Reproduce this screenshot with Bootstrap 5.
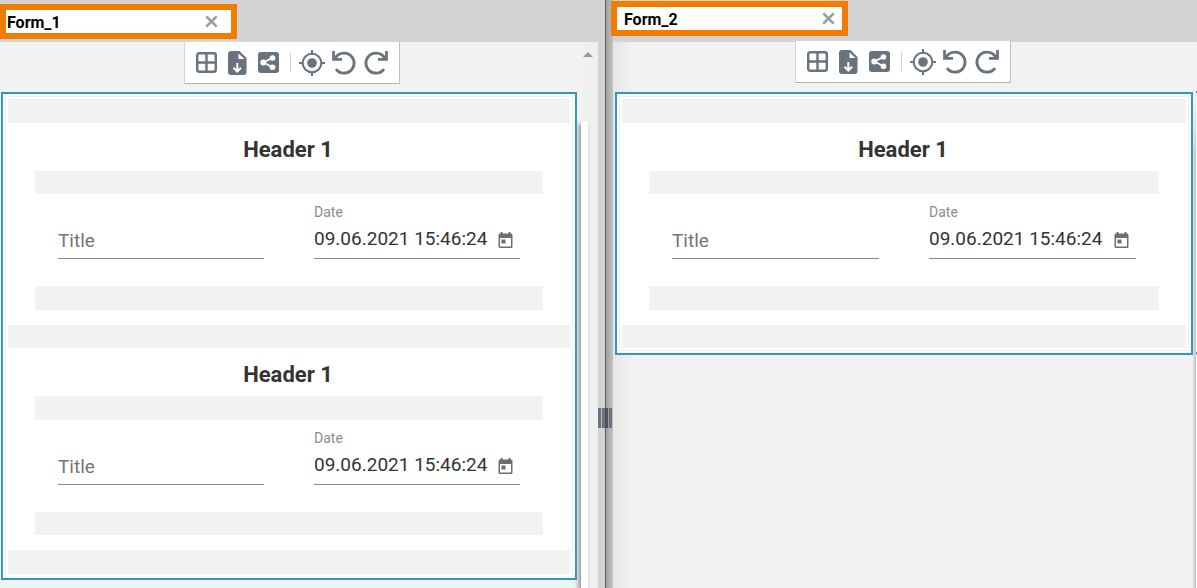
<!DOCTYPE html>
<html lang="en">
<head>
<meta charset="utf-8">
<meta name="viewport" content="width=device-width, initial-scale=1">
<title>Form designer</title>
<link href="https://cdn.jsdelivr.net/npm/bootstrap@5.3.0/dist/css/bootstrap.min.css" rel="stylesheet">
<style>
  :root { --strip: #f2f2f2; --bar: #d3d3d3; --blue: #2b98cf; --orange: #f07d00; --ink: #68737e; }
  body { font-family: Roboto, "Liberation Sans", sans-serif; background: var(--strip); color: #333; }
  .pane-left { flex: 598 1 0; min-width: 0; }
  .pane-right { flex: 584 1 0; min-width: 0; }
  .tabbar { height: 42px; background: var(--bar); }
  .pane-left .tabbar { padding-top: 4px; }
  .pane-right .tabbar { padding-top: 1px; }
  .doc-tab { width: 237px; height: 35px; border: 6px solid var(--orange); background: #fff; color: #000; font-weight: 700; font-size: 16px; line-height: 25px; padding: 0 12px 0 1px; }
  .pane-right .doc-tab { margin-left: -2px; padding: 0 6px 0 7px; position: relative; z-index: 2; }
  .tab-x, .tool { border: 0; background: none; padding: 0; color: var(--ink); display: flex; align-items: center; justify-content: center; }
  .tab-x { color: #959ca3; width: 15px; height: 22px; }
  .toolbar { height: 43px; width: 216px; padding: 0 6px; background: #fff; border: 1px solid #d5d5d5; border-bottom-color: #b3b3b3; border-right-color: #c3c3c3; margin: -1px 0 8px calc(50% - 105px); position: relative; z-index: 1; }
  .pane-right .toolbar { margin: -2px 0 9px calc(50% - 109px); }
  .tool { width: 31px; height: 39px; }
  .tool-wide { width: 32px; }
  .divider { width: 1px; height: 19px; background: #d0d0d0; margin: 0 5px 0 6px; }
  .canvas { min-width: 0; padding: 0 5px 0 1px; }
  .pane-right .canvas { padding: 0 0 0 2px; background: linear-gradient(90deg, #e6e6e6, var(--strip) 22px); }
  .form-card { border: 2px solid var(--blue); background: #fff; padding: 2px; }
  .form-inner { border: 1px solid #efefef; padding: 2px; }
  .pane-left .form-inner { border-bottom: 0; }
  .strip-outer { height: 24px; background: var(--strip); }
  .strip-mid { height: 23px; background: var(--strip); }
  .section { padding: 0 27px 15px; }
  .section h2 { font-size: 22px; font-weight: 700; line-height: 54px; height: 48px; text-align: center; margin: 0; padding-right: 2px; }
  .fields { height: 92px; padding: 10px 23px 0; gap: 50px; }
  .field { flex: 1 1 0; min-width: 0; height: 55px; border-bottom: 1px solid #8a8a8a; }
  .field label { display: block; font-size: 14px; line-height: 16px; height: 16px; color: #8d8d8d; }
  .field input { width: 100%; min-width: 0; border: 0; outline: 0; padding: 0; background: none; font-size: 19px; line-height: 24px; height: 24px; color: #333; }
  .field input::placeholder { color: #757575; opacity: 1; }
  .entry { margin-top: 7px; padding-right: 7px; }
  .field-title .entry { margin-top: 25px; }
  .pick { border: 0; background: none; padding: 2px 0 0; color: #6e6e6e; display: flex; }
  .scroll-col { flex: 0 0 16px; background: #f0f0f0; padding-top: 9px; margin-top: 1px; }
  .up-arrow { border: 5px solid transparent; border-top: 0; border-bottom-color: #9b9b9b; margin-left: 1px; }
  .thumb { flex: 1; width: 7px; background: #fff; margin: 64px 0 0 -1px; box-shadow: -2px 3px 5px #888; align-self: flex-start; position: relative; }
  .splitter { flex: 0 0 15px; background: linear-gradient(90deg, var(--bar) 7px, #5c5c5c 7px 8px, #a0a0a0 8px, #c3c3c3 15px); cursor: col-resize; padding-top: 408px; }
  .grip { width: 14px; height: 20px; background: linear-gradient(90deg, var(--ink) 3px, #bbb 3px 4px, var(--ink) 4px 7px, #4b5259 7px 10px, #9a9a9a 10px 11px, var(--ink) 11px); }
  .edge { flex: 0 0 4px; background:
      linear-gradient(var(--blue), var(--blue)) 100% 49px / 1px 2px no-repeat,
      linear-gradient(var(--blue), var(--blue)) 100% 310px / 1px 2px no-repeat,
      linear-gradient(var(--strip), transparent) 0 60px / 4px 50px no-repeat,
      linear-gradient(var(--strip), var(--strip)) 0 0 / 4px 60px no-repeat,
      linear-gradient(90deg, #e0e0e0, #c2c2c2 3px, #f7f7f7 3px); }
</style>
</head>
<body>
<svg class="d-none" aria-hidden="true">
  <symbol id="i-grid" viewBox="0 0 21 21"><rect x="1.2" y="1.2" width="18.6" height="18.6" rx="2" fill="none" stroke="currentColor" stroke-width="2.4"/><path d="M10.5 1v19M1 10.5h19" stroke="currentColor" stroke-width="2.4"/></symbol>
  <symbol id="i-file" viewBox="0 0 19 24"><path d="M3 0h8.5L18.500 7v14a3 3 0 0 1-3 3H3a3 3 0 0 1-3-3V3a3 3 0 0 1 3-3z" fill="currentColor"/><path d="M10.500 2.500V8H16.500z" fill="#fff"/><path d="M9.300 12v8M5.500 16.700l3.800 3.800 3.800-3.800" stroke="#fff" stroke-width="2" fill="none"/></symbol>
  <symbol id="i-share" viewBox="0 0 21 21"><rect width="21" height="21" rx="3" fill="currentColor"/><path d="M15 5.500L5.500 10.500l9.500 5" stroke="#fff" stroke-width="1.900" fill="none"/><g fill="#fff"><circle cx="14.500" cy="6" r="2.800"/><circle cx="5.200" cy="10.500" r="2.900"/><circle cx="14.500" cy="15.300" r="2.800"/></g></symbol>
  <symbol id="i-target" viewBox="0 0 26 26"><circle cx="13" cy="13" r="9.300" fill="none" stroke="currentColor" stroke-width="2"/><circle cx="13" cy="13" r="4.800" fill="currentColor"/><path d="M13 0v4M13 22v4M0 13h4M22 13h4" stroke="currentColor" stroke-width="2"/></symbol>
  <symbol id="i-undo" viewBox="0 0 24 24"><path d="M2.500 8.100C4.500 4.300 8 2.100 12 2.100a10 10 0 1 1-8 16" fill="none" stroke="currentColor" stroke-width="2.900"/><path d="M1.500 0v8.300h8.500" fill="none" stroke="currentColor" stroke-width="2.700"/></symbol>
  <symbol id="i-redo" viewBox="0 0 24 24"><g transform="matrix(-1 0 0 1 24 0)"><path d="M2.500 8.100C4.500 4.300 8 2.100 12 2.100a10 10 0 1 1-8 16" fill="none" stroke="currentColor" stroke-width="2.900"/><path d="M1.500 0v8.300h8.500" fill="none" stroke="currentColor" stroke-width="2.700"/></g></symbol>
  <symbol id="i-x" viewBox="0 0 13 13"><path d="M1.300 1.300l10.400 10.400M11.700 1.300L1.300 11.700" stroke="currentColor" stroke-width="2.600"/></symbol>
  <symbol id="i-cal" viewBox="0 0 15 17"><path d="M2 1.500h11a1.500 1.500 0 0 1 1.500 1.500v11.500A1.500 1.500 0 0 1 13 16H2a1.500 1.500 0 0 1-1.500-1.500V3A1.500 1.500 0 0 1 2 1.500zM2 6v8.500h11V6z" fill="currentColor" fill-rule="evenodd"/><path d="M2.500 0h2v3h-2zM10.500 0h2v3h-2zM3.500 7.500h4v4h-4z" fill="currentColor"/></symbol>
</svg>

<div class="d-flex min-vh-100">
  <section class="pane-left d-flex flex-column">
    <div class="tabbar">
      <div class="doc-tab d-flex justify-content-between"><span>Form_1</span><button type="button" class="tab-x" aria-label="Close Form_1"><svg width="13" height="13"><use href="#i-x"/></svg></button></div>
    </div>
    <div class="d-flex flex-grow-1">
      <main class="canvas flex-grow-1">
        <div class="toolbar d-flex align-items-center">
          <button type="button" class="tool" aria-label="Grid"><svg width="21" height="21"><use href="#i-grid"/></svg></button>
          <button type="button" class="tool" aria-label="Export"><svg width="19" height="24"><use href="#i-file"/></svg></button>
          <button type="button" class="tool" aria-label="Share"><svg width="21" height="21"><use href="#i-share"/></svg></button>
          <span class="divider"></span>
          <button type="button" class="tool tool-wide" aria-label="Center"><svg width="26" height="26"><use href="#i-target"/></svg></button>
          <button type="button" class="tool tool-wide" aria-label="Undo"><svg width="24" height="24"><use href="#i-undo"/></svg></button>
          <button type="button" class="tool tool-wide" aria-label="Redo"><svg width="24" height="24"><use href="#i-redo"/></svg></button>
        </div>
        <form class="form-card">
          <div class="form-inner">
            <div class="strip-outer"></div>
            <div class="section">
              <h2>Header 1</h2>
              <div class="strip-mid"></div>
              <div class="fields d-flex">
                <div class="field field-title"><div class="entry"><input type="text" placeholder="Title" aria-label="Title"></div></div>
                <div class="field"><label for="date1">Date</label><div class="entry d-flex align-items-center"><input type="text" id="date1" value="09.06.2021 15:46:24"><button type="button" class="pick" aria-label="Pick date"><svg width="15" height="17"><use href="#i-cal"/></svg></button></div></div>
              </div>
              <div class="strip-outer"></div>
            </div>
            <div class="strip-mid"></div>
            <div class="section">
              <h2>Header 1</h2>
              <div class="strip-outer"></div>
              <div class="fields d-flex">
                <div class="field field-title"><div class="entry"><input type="text" placeholder="Title" aria-label="Title"></div></div>
                <div class="field"><label for="date2">Date</label><div class="entry d-flex align-items-center"><input type="text" id="date2" value="09.06.2021 15:46:24"><button type="button" class="pick" aria-label="Pick date"><svg width="15" height="17"><use href="#i-cal"/></svg></button></div></div>
              </div>
              <div class="strip-mid"></div>
            </div>
            <div class="strip-outer"></div>
          </div>
        </form>
      </main>
      <div class="scroll-col d-flex flex-column">
        <span class="up-arrow align-self-start"></span>
        <span class="thumb"></span>
      </div>
    </div>
  </section>

  <div class="splitter">
    <div class="grip"></div>
  </div>

  <section class="pane-right d-flex flex-column">
    <div class="tabbar">
      <div class="doc-tab d-flex justify-content-between"><span>Form_2</span><button type="button" class="tab-x" aria-label="Close Form_2"><svg width="13" height="13"><use href="#i-x"/></svg></button></div>
    </div>
    <div class="d-flex flex-grow-1">
      <main class="canvas flex-grow-1">
        <div class="toolbar d-flex align-items-center">
          <button type="button" class="tool" aria-label="Grid"><svg width="21" height="21"><use href="#i-grid"/></svg></button>
          <button type="button" class="tool" aria-label="Export"><svg width="19" height="24"><use href="#i-file"/></svg></button>
          <button type="button" class="tool" aria-label="Share"><svg width="21" height="21"><use href="#i-share"/></svg></button>
          <span class="divider"></span>
          <button type="button" class="tool tool-wide" aria-label="Center"><svg width="26" height="26"><use href="#i-target"/></svg></button>
          <button type="button" class="tool tool-wide" aria-label="Undo"><svg width="24" height="24"><use href="#i-undo"/></svg></button>
          <button type="button" class="tool tool-wide" aria-label="Redo"><svg width="24" height="24"><use href="#i-redo"/></svg></button>
        </div>
        <form class="form-card">
          <div class="form-inner">
            <div class="strip-outer"></div>
            <div class="section">
              <h2>Header 1</h2>
              <div class="strip-mid"></div>
              <div class="fields d-flex">
                <div class="field field-title"><div class="entry"><input type="text" placeholder="Title" aria-label="Title"></div></div>
                <div class="field"><label for="date3">Date</label><div class="entry d-flex align-items-center"><input type="text" id="date3" value="09.06.2021 15:46:24"><button type="button" class="pick" aria-label="Pick date"><svg width="15" height="17"><use href="#i-cal"/></svg></button></div></div>
              </div>
              <div class="strip-outer"></div>
            </div>
            <div class="strip-mid"></div>
          </div>
        </form>
      </main>
      <div class="edge"></div>
    </div>
  </section>
</div>
<script src="https://cdn.jsdelivr.net/npm/bootstrap@5.3.0/dist/js/bootstrap.bundle.min.js"></script>
</body>
</html>
